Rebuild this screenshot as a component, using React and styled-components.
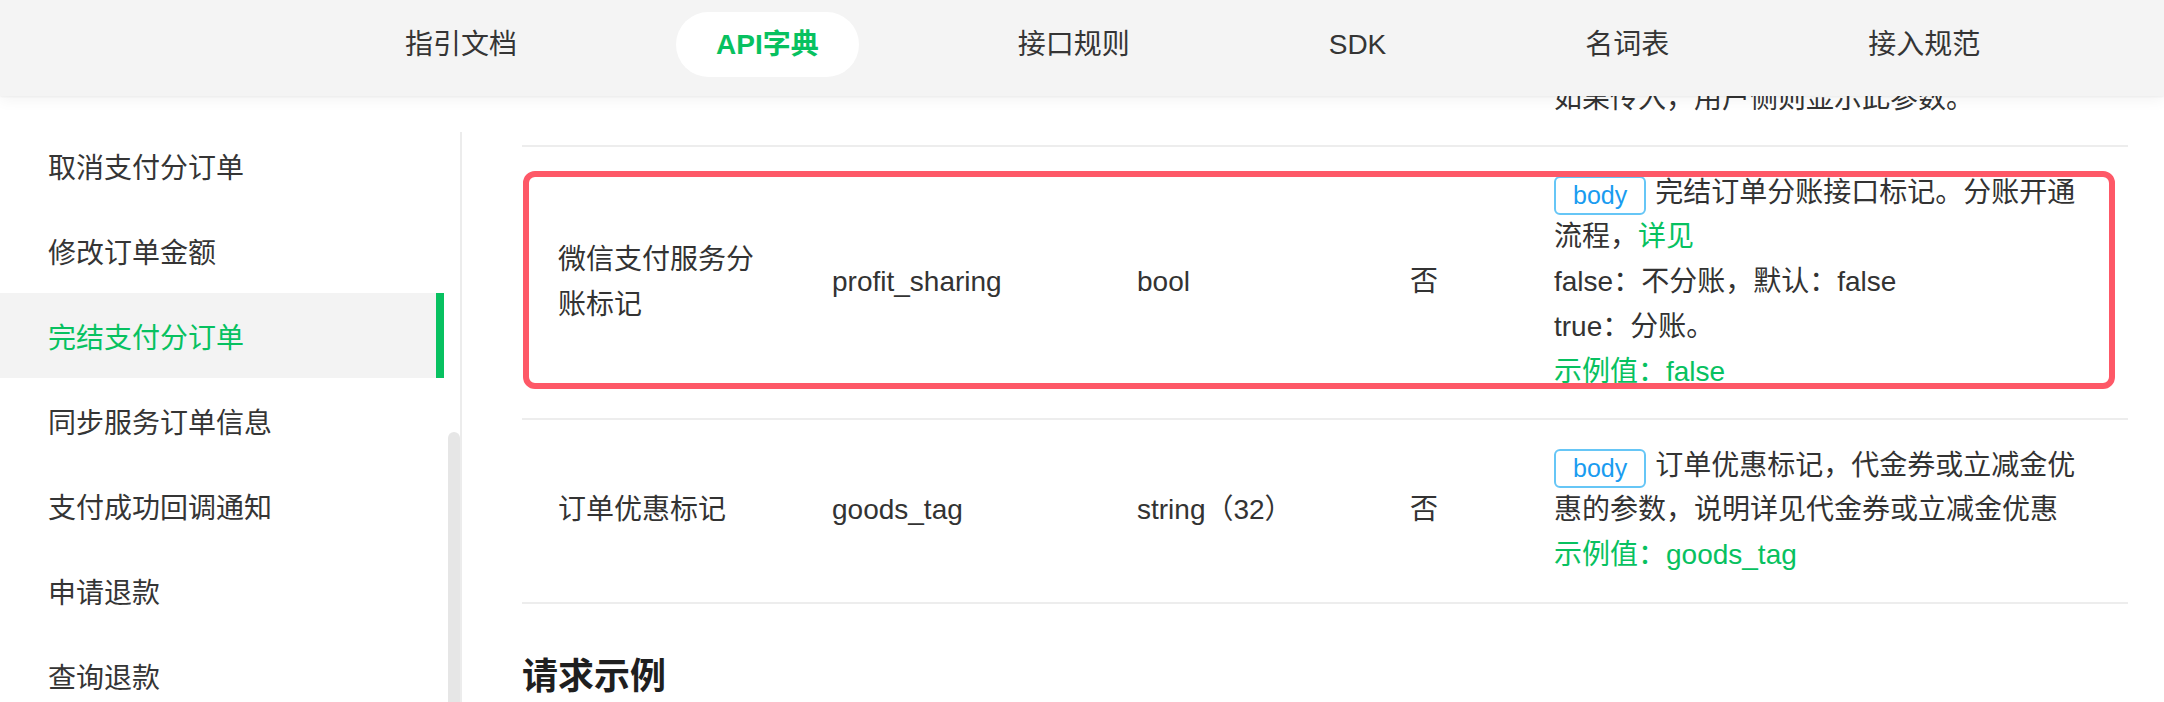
import styled, { createGlobalStyle } from 'styled-components';

//  Top navigation
const navLinks = [
  { label: '指引文档' },
  { label: 'API字典', active: true },
  { label: '接口规则' },
  { label: 'SDK' },
  { label: '名词表' },
  { label: '接入规范' },
];

//  Sidebar menu
const menuItems = [
  '取消支付分订单',
  '修改订单金额',
  '完结支付分订单',
  '同步服务订单信息',
  '支付成功回调通知',
  '申请退款',
  '查询退款',
];
const activeMenu = '完结支付分订单';

const GlobalStyle = createGlobalStyle`
  html, body {
    margin: 0;
    padding: 0;
    background: #fff;
  }

  body {
    font-family: 'Liberation Sans', 'Noto Sans CJK SC', sans-serif;
    color: #333;
    overflow: hidden;
  }
`;

const Page = styled.div`
  position: relative;
  width: 2164px;
  height: 702px;
  overflow: hidden;
`;

// header floats above the scrolled page content
const Header = styled.header`
  position: absolute;
  top: 0;
  left: 0;
  right: 0;
  z-index: 10;
  height: 96px;
  box-sizing: border-box;
  padding: 12px 0 0 365px;
  background: #f4f4f4;
  box-shadow: 0 1px 2px rgba(0, 0, 0, 0.05), 0 4px 14px rgba(0, 0, 0, 0.05);
`;

const Nav = styled.nav`
  display: flex;
  align-items: center;
  gap: 119px;
`;

const NavItem = styled.a`
  display: flex;
  align-items: center;
  height: 65px;
  padding: 0 40px;
  border-radius: 33px;
  font-size: 28px;
  line-height: 40px;
  white-space: nowrap;
  text-decoration: none;
  color: ${(p) => (p.$active ? '#07c160' : '#353535')};
  font-weight: ${(p) => (p.$active ? 700 : 400)};
  background: ${(p) => (p.$active ? '#fff' : 'transparent')};
`;

const Body = styled.div`
  display: flex;
  height: 100%;
  box-sizing: border-box;
  padding-top: 96px;
`;

const Sidebar = styled.aside`
  position: relative;
  flex: none;
  width: 462px;
  margin-top: 36px;
  border-right: 2px solid #ececec;
  box-sizing: border-box;
  overflow: hidden;
`;

// list is scrolled a little inside the sidebar
const SideList = styled.ul`
  list-style: none;
  margin: -9px 0 0;
  padding: 0;
  width: 444px;
`;

const SideItem = styled.li`
  display: flex;
  align-items: center;
  height: 85px;
  padding-left: 48px;
  box-sizing: border-box;
  font-size: 28px;
  color: ${(p) => (p.$active ? '#07c160' : '#353535')};
  background: ${(p) => (p.$active ? '#f3f3f3' : 'transparent')};
  border-right: 8px solid ${(p) => (p.$active ? '#07c160' : 'transparent')};
`;

const ScrollThumb = styled.div`
  position: absolute;
  top: 300px;
  right: 0;
  bottom: 0;
  width: 12px;
  border-radius: 6px 6px 0 0;
  background: #e6e6e6;
`;

const Content = styled.main`
  flex: 1;
  padding: 0 36px 0 60px;
  overflow: hidden;
`;

// content is scrolled: the previous parameter row sits under the header
const Table = styled.div`
  margin-top: -177px;
`;

const Row = styled.div`
  position: relative;
  display: grid;
  grid-template-columns: 274px 305px 273px 144px 1fr;
  align-items: center;
  border-bottom: 2px solid #ededed;
`;

const Cell = styled.div`
  padding: 23.5px 36px;
  font-size: 28px;
  line-height: 44.8px;
  color: #333;
`;

const Tag = styled.span`
  display: inline-block;
  vertical-align: top;
  height: 39px;
  margin: 5px 9px 0 0;
  padding: 0 17px;
  box-sizing: border-box;
  border: 2px solid #66c6f6;
  border-radius: 6px;
  font-size: 25px;
  line-height: 35px;
  color: #1a9cf0;
`;

const Link = styled.a`
  color: #07c160;
  text-decoration: none;
`;

const Line = styled.div`
  color: ${(p) => (p.$green ? '#07c160' : 'inherit')};
`;

const Highlight = styled.div`
  position: absolute;
  top: 24px;
  left: 1px;
  right: 13px;
  bottom: 29px;
  border: 6px solid #fe5867;
  border-radius: 12px;
  pointer-events: none;
`;

const SectionTitle = styled.h2`
  margin: 48px 0 0;
  font-size: 36px;
  line-height: 50px;
  font-weight: 700;
  color: #1f1f1f;
`;

export default function App() {
  return (
    <Page>
      <GlobalStyle />
      <Header>
        <Nav>
          {navLinks.map((link) => (
            <NavItem key={link.label} $active={link.active}>
              {link.label}
            </NavItem>
          ))}
        </Nav>
      </Header>

      <Body>
        <Sidebar>
          <SideList>
            {menuItems.map((item) => (
              <SideItem key={item} $active={item === activeMenu}>
                {item}
              </SideItem>
            ))}
          </SideList>
          <ScrollThumb />
        </Sidebar>

        <Content>
          <Table>
            <Row>
              <Cell>服务结束地点</Cell>
              <Cell>end_location</Cell>
              <Cell>string（50）</Cell>
              <Cell>否</Cell>
              <Cell>
                <Line>
                  <Tag>body</Tag>服务结束地点，不超过50个字符
                </Line>
                <Line>超出报错处理。结束使用服务的地点，</Line>
                <Line>【建议】在线下使用服务场景中填写。</Line>
                <Line>如果传入，用户侧则显示此参数。</Line>
              </Cell>
            </Row>

            <Row>
              <Cell>微信支付服务分账标记</Cell>
              <Cell>profit_sharing</Cell>
              <Cell>bool</Cell>
              <Cell>否</Cell>
              <Cell>
                <Line>
                  <Tag>body</Tag>完结订单分账接口标记。分账开通流程，
                  <Link>详见</Link>
                </Line>
                <Line>false：不分账，默认：false</Line>
                <Line>true：分账。</Line>
                <Line $green>示例值：false</Line>
              </Cell>
              <Highlight />
            </Row>

            <Row>
              <Cell>订单优惠标记</Cell>
              <Cell>goods_tag</Cell>
              <Cell>string（32）</Cell>
              <Cell>否</Cell>
              <Cell>
                <Line>
                  <Tag>body</Tag>订单优惠标记，代金券或立减金优惠的参数，说明详见代金券或立减金优惠
                </Line>
                <Line $green>示例值：goods_tag</Line>
              </Cell>
            </Row>
          </Table>

          <SectionTitle>请求示例</SectionTitle>
        </Content>
      </Body>
    </Page>
  );
}
